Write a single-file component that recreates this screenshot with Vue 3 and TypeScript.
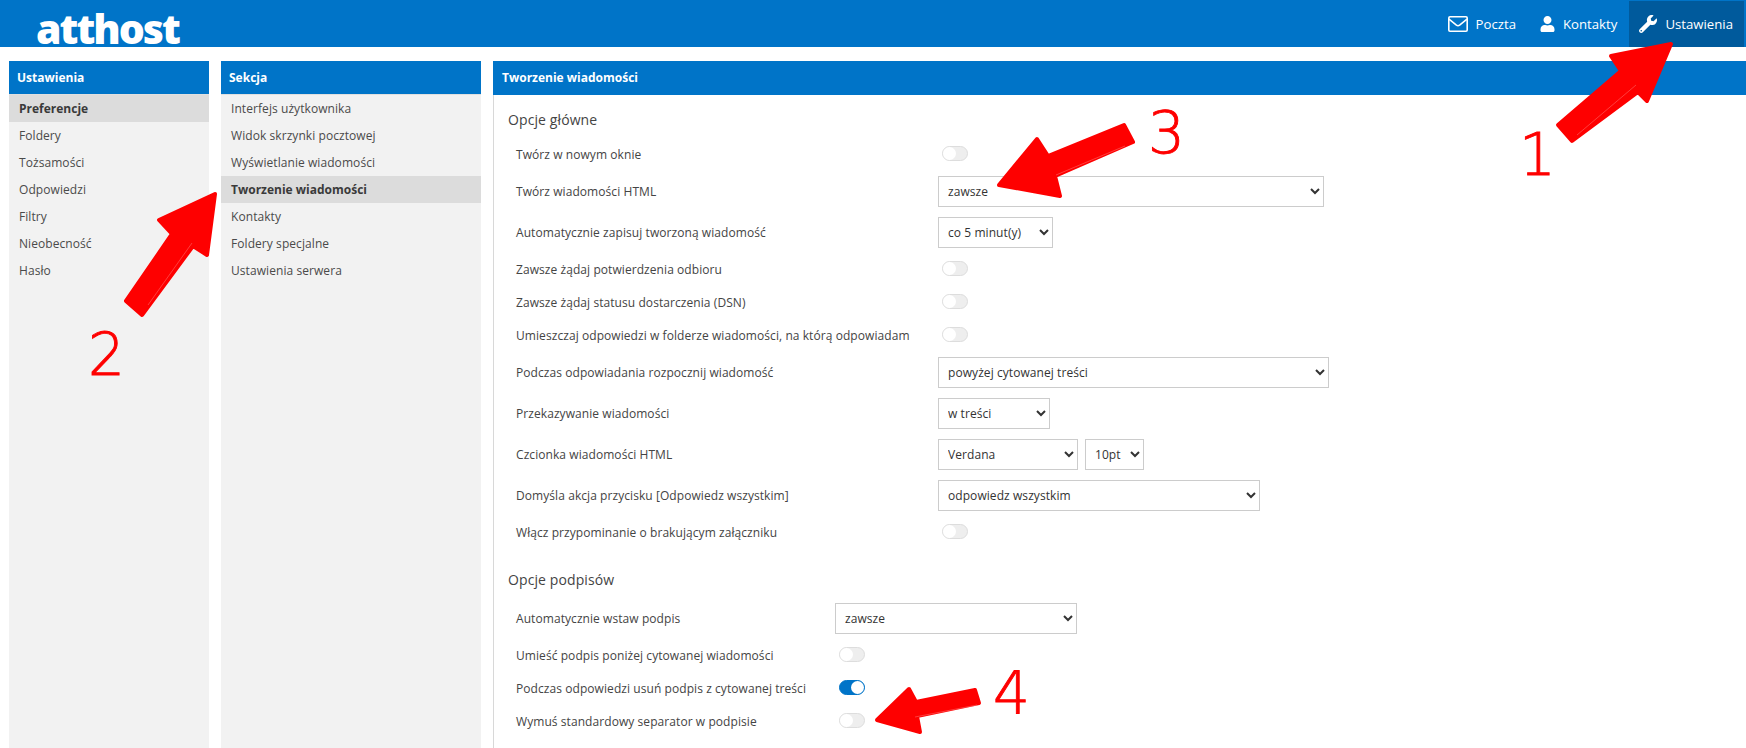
<template>
  <div class="page">
    <header class="topbar">
      <span class="logo">atthost</span>
      <nav class="topnav">
        <a class="navlink">
          <svg class="ico ico-mail" viewBox="0 0 20 16"><rect x="0.8" y="0.8" width="18.4" height="14.4" rx="1.2" /><path d="M1 3.2 L8.4 9.2 Q10 10.4 11.6 9.2 L19 3.2" /></svg>
          Poczta
        </a>
        <a class="navlink">
          <svg class="ico ico-user" viewBox="0 0 448 512"><path d="M224 256c70.7 0 128-57.3 128-128S294.7 0 224 0 96 57.3 96 128s57.3 128 128 128zm89.6 32h-16.7c-22.2 10.2-46.9 16-72.9 16s-50.6-5.8-72.9-16h-16.7C60.2 288 0 348.2 0 422.4V464c0 26.5 21.5 48 48 48h352c26.5 0 48-21.5 48-48v-41.6c0-74.2-60.2-134.4-134.4-134.4z" /></svg>
          Kontakty
        </a>
        <a class="navlink active">
          <svg class="ico ico-wrench" viewBox="0 0 512 512"><path d="M507.73 109.1c-2.24-9.03-13.54-12.09-20.12-5.51l-74.36 74.36-67.88-11.31-11.31-67.88 74.36-74.36c6.62-6.62 3.43-17.9-5.66-20.16-47.38-11.74-99.55.91-136.58 37.93-39.64 39.64-50.55 97.1-34.05 147.2L18.74 402.76c-24.99 24.99-24.99 65.51 0 90.5 24.99 24.99 65.51 24.99 90.5 0l213.21-213.21c50.12 16.71 107.47 5.68 147.37-34.22 37.07-37.07 49.7-89.32 37.91-136.73zM64 472c-13.25 0-24-10.75-24-24 0-13.26 10.75-24 24-24s24 10.74 24 24c0 13.25-10.75 24-24 24z" /></svg>
          Ustawienia
        </a>
      </nav>
    </header>

    <div class="columns">
      <aside class="panel col-settings">
        <h2 class="panel-title">Ustawienia</h2>
        <ul class="menu">
          <li v-for="item in settingsMenu" :key="item" :class="{ selected: item === 'Preferencje' }">{{ item }}</li>
        </ul>
      </aside>

      <aside class="panel col-section">
        <h2 class="panel-title">Sekcja</h2>
        <ul class="menu">
          <li v-for="item in sectionMenu" :key="item" :class="{ selected: item === 'Tworzenie wiadomości' }">{{ item }}</li>
        </ul>
      </aside>

      <main class="content">
        <h2 class="content-title">Tworzenie wiadomości</h2>
        <div class="form">
          <section v-for="group in groups" :key="group.title" class="group">
            <h3 class="group-title">{{ group.title }}</h3>
            <table class="options">
              <tbody>
                <tr v-for="row in group.rows" :key="row.label" :class="row.selects ? 'with-select' : 'with-toggle'">
                  <td class="label" :style="{ width: group.labelWidth + 'px' }">{{ row.label }}</td>
                  <td class="control">
                    <template v-if="row.selects">
                      <select v-for="s in row.selects" :key="s.value" :style="{ width: s.width + 'px' }">
                        <option>{{ s.value }}</option>
                      </select>
                    </template>
                    <span v-else class="toggle" :class="{ on: row.on }"><i></i></span>
                  </td>
                </tr>
              </tbody>
            </table>
          </section>
        </div>
      </main>
    </div>

    <svg class="notes" viewBox="0 0 1746 748" width="1746" height="748">
      <g v-for="a in arrows" :key="a.num">
        <polygon class="arrow" :points="a.points" />
        <line class="seam" :x1="a.seam[0]" :y1="a.seam[1]" :x2="a.seam[2]" :y2="a.seam[3]" />
        <text class="num" :x="a.x" :y="a.y">{{ a.num }}</text>
      </g>
    </svg>
  </div>
</template>

<script setup lang="ts">
interface SelectBox { value: string; width: number }
interface Row { label: string; selects?: SelectBox[]; on?: boolean }
interface Group { title: string; labelWidth: number; rows: Row[] }

const settingsMenu = ['Preferencje', 'Foldery', 'Tożsamości', 'Odpowiedzi', 'Filtry', 'Nieobecność', 'Hasło']
const sectionMenu = [
  'Interfejs użytkownika',
  'Widok skrzynki pocztowej',
  'Wyświetlanie wiadomości',
  'Tworzenie wiadomości',
  'Kontakty',
  'Foldery specjalne',
  'Ustawienia serwera',
]

const groups: Group[] = [
  {
    title: 'Opcje główne',
    labelWidth: 430,
    rows: [
      { label: 'Twórz w nowym oknie' },
      { label: 'Twórz wiadomości HTML', selects: [{ value: 'zawsze', width: 386 }] },
      { label: 'Automatycznie zapisuj tworzoną wiadomość', selects: [{ value: 'co 5 minut(y)', width: 115 }] },
      { label: 'Zawsze żądaj potwierdzenia odbioru' },
      { label: 'Zawsze żądaj statusu dostarczenia (DSN)' },
      { label: 'Umieszczaj odpowiedzi w folderze wiadomości, na którą odpowiadam' },
      { label: 'Podczas odpowiadania rozpocznij wiadomość', selects: [{ value: 'powyżej cytowanej treści', width: 391 }] },
      { label: 'Przekazywanie wiadomości', selects: [{ value: 'w treści', width: 112 }] },
      { label: 'Czcionka wiadomości HTML', selects: [{ value: 'Verdana', width: 140 }, { value: '10pt', width: 59 }] },
      { label: 'Domyśla akcja przycisku [Odpowiedz wszystkim]', selects: [{ value: 'odpowiedz wszystkim', width: 322 }] },
      { label: 'Włącz przypominanie o brakującym załączniku' },
    ],
  },
  {
    title: 'Opcje podpisów',
    labelWidth: 327,
    rows: [
      { label: 'Automatycznie wstaw podpis', selects: [{ value: 'zawsze', width: 242 }] },
      { label: 'Umieść podpis poniżej cytowanej wiadomości' },
      { label: 'Podczas odpowiedzi usuń podpis z cytowanej treści', on: true },
      { label: 'Wymuś standardowy separator w podpisie' },
    ],
  },
]

const arrows = [
  { num: '1', x: 1519, y: 175, points: '1671,44 1611,56 1621,71 1558,125 1572,141 1638,92 1647,101', seam: [1577, 135, 1636, 85] },
  { num: '2', x: 88, y: 375, points: '215,194 159,220 172,234 126,301 142,315 193,246 207,255', seam: [148, 305, 192, 243] },
  { num: '3', x: 1148, y: 153, points: '999,185 1037,139 1048,156 1124,125 1133,142 1055,176 1060,196', seam: [1056, 175, 1125, 146] },
  { num: '4', x: 993, y: 713, points: '877,720 909,689 916,702 975,690 979,703 917,716 920,732', seam: [915, 717, 977, 705] },
]
</script>

<style>
html, body { margin: 0; background: #fff; overflow: hidden; }
</style>

<style scoped>
* { box-sizing: border-box; }

.page {
  position: relative;
  width: 1746px; height: 748px; overflow: hidden;
  display: flex; flex-direction: column;
  font-family: 'Open Sans', sans-serif; font-size: 12px; color: #444;
  background: #fff;
}

.topbar {
  height: 47px; flex-shrink: 0;
  background: #0074c8;
  display: flex; justify-content: space-between;
  padding: 0 2px 0 36px;
}
.logo {
  color: #fff; font-size: 41px; font-weight: 800; line-height: 36px; letter-spacing: -2px;
  margin-top: 10px; height: 36px;
}
.topnav { display: flex; align-items: stretch; padding-top: 1px; }
.navlink {
  display: flex; align-items: center; gap: 8px;
  color: #fff; font-size: 13.2px; padding: 0 12px;
}
.navlink.active { background: #005a9c; padding: 0 11px 0 10px; }
.ico { display: block; fill: #fff; flex-shrink: 0; }
.ico-mail { width: 20px; height: 16px; fill: none; stroke: #fff; stroke-width: 1.6; }
.ico-user { width: 15px; height: 16px; }
.ico-wrench { width: 18px; height: 18px; }

.columns { flex: 1; display: flex; gap: 12px; padding: 14px 0 0 9px; min-height: 0; }
.panel { background: #f2f2f2; flex-shrink: 0; }
.col-settings { width: 200px; }
.col-section { width: 260px; }
.panel-title, .content-title {
  margin: 0; background: #0074c8; color: #fff;
  font-size: 12px; font-weight: 700;
}
.panel-title { height: 33px; line-height: 33px; padding-left: 8px; }
.menu { list-style: none; margin: 0; padding: 0; border-top: 1px solid #e0e0e0; }
.menu li { height: 27px; line-height: 27px; padding-left: 10px; color: #4a4a4a; letter-spacing: 0.07px; }
.menu li.selected { background: #dcdcdc; font-weight: 700; color: #3a3a3a; letter-spacing: 0; }

.content { flex: 1; border-left: 1px solid #d8d8d8; min-width: 0; }
.content-title { height: 34px; line-height: 34px; margin-left: -1px; padding-left: 9px; }
.form { padding: 15px 0 0 14px; }
.group { margin-bottom: 21px; }
.group-title { margin: 0; font-size: 14px; font-weight: 400; color: #444; line-height: 20px; letter-spacing: 0.1px; }

.options { border-collapse: collapse; margin: 8px 0 0 0; }
.options td { padding: 0; vertical-align: middle; }
.label { padding-left: 8px !important; letter-spacing: 0.07px; }
.with-toggle { height: 33px; }
.with-select { height: 41px; }
.control { display: flex; align-items: center; gap: 7px; height: inherit; }

select {
  height: 31px; font-family: inherit; font-size: 12px; color: #333; letter-spacing: 0.07px;
  background: #fff; border: 1px solid #ccc; border-radius: 0; padding: 0 5px;
}

.toggle {
  display: block; width: 26px; height: 15px; margin: -2px 0 0 4px;
  background: #eee; border: 1px solid #ddd; border-radius: 8px; position: relative;
}
.toggle i {
  position: absolute; left: 0; top: 0; width: 13px; height: 13px;
  border-radius: 50%; background: #fff;
}
.toggle.on { background: #0074c8; border-color: #0074c8; }
.toggle.on i { left: 11px; }

.notes { position: absolute; left: 0; top: 0; pointer-events: none; }
.arrow { fill: #fe0000; stroke: #fe0000; stroke-width: 4; stroke-linejoin: round; }
.seam { stroke: #ff9090; stroke-width: 0.7; opacity: 0.6; }
.num { fill: #fe0000; stroke: #fe0000; stroke-width: 0.9; font-family: 'DejaVu Sans', sans-serif; font-weight: 200; font-size: 58px; }
</style>
